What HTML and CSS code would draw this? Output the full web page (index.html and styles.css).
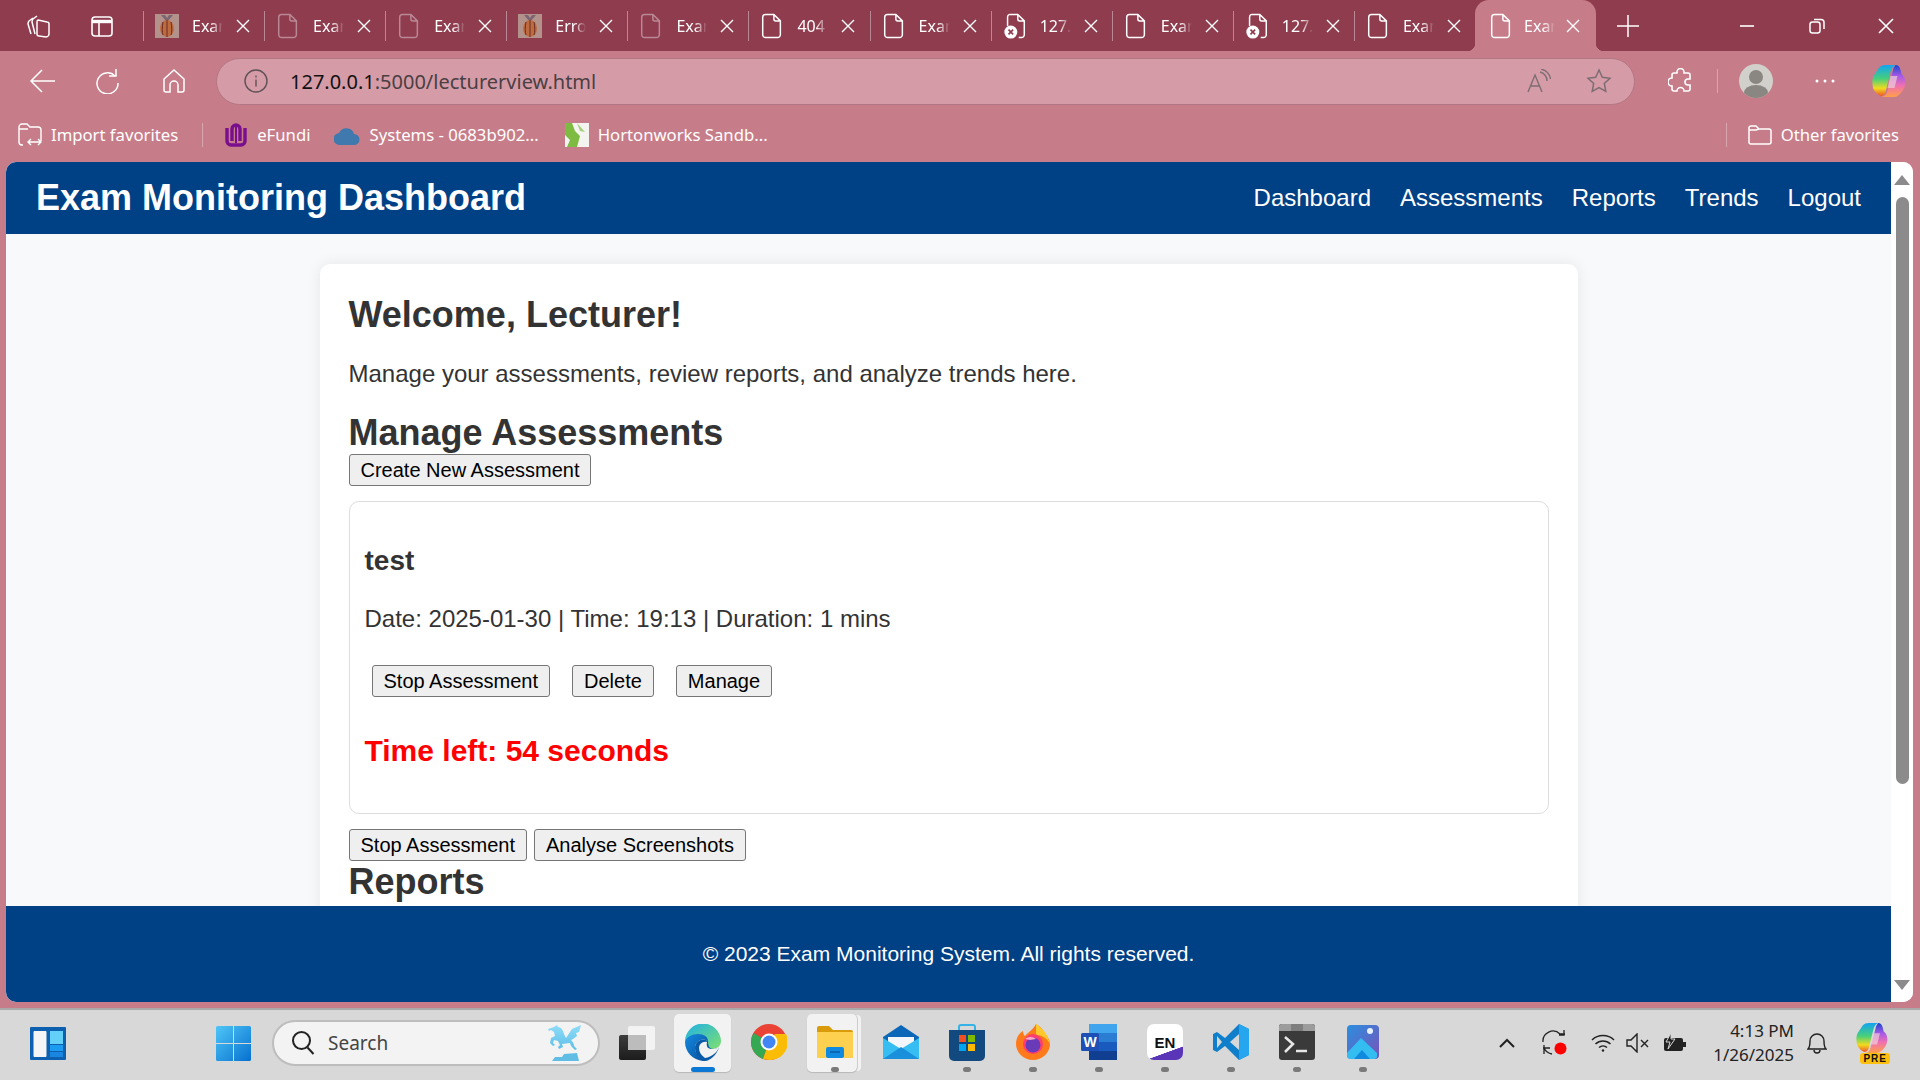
FILE: index.html
```html
<!DOCTYPE html>
<html lang="en">
<head>
    <meta charset="UTF-8">
    <meta name="viewport" content="width=device-width, initial-scale=1.0">
    <title>Exam Monitoring Dashboard</title>
    <link rel="stylesheet" href="styles.css">
</head>
<body>
    <svg class="defs" width="0" height="0">
        <defs>
            <linearGradient id="cpA" x1="0" y1="0" x2="0" y2="1">
                <stop offset="0" stop-color="#12a4f0"/>
                <stop offset=".45" stop-color="#48d07a"/>
                <stop offset=".75" stop-color="#f0dc1e"/>
                <stop offset="1" stop-color="#f0562c"/>
            </linearGradient>
            <linearGradient id="cpB" x1="0" y1="0" x2="0" y2="1">
                <stop offset="0" stop-color="#1746d0"/>
                <stop offset=".35" stop-color="#a85ae6"/>
                <stop offset=".65" stop-color="#f070b0"/>
                <stop offset="1" stop-color="#ffa048"/>
            </linearGradient>
        </defs>
        <symbol id="doc" viewBox="0 0 24 28">
            <path d="M5 1.5h9l7 7v15a3 3 0 0 1-3 3H5a3 3 0 0 1-3-3v-19a3 3 0 0 1 3-3zM14 1.5v5a2 2 0 0 0 2 2h5" fill="none" stroke="currentColor" stroke-width="1.6"/>
        </symbol>
        <symbol id="doc-x" viewBox="0 0 24 28">
            <path d="M6 1.5h9l7 7v15a3 3 0 0 1-3 3h-3M4 14V4.5a3 3 0 0 1 2-3M15 1.5v5a2 2 0 0 0 2 2h5" fill="none" stroke="#fff" stroke-width="1.6"/>
            <circle cx="7.5" cy="20.5" r="7" fill="#fff"/>
            <path d="M5 18l5 5M10 18l-5 5" stroke="#8f3c4e" stroke-width="1.8"/>
        </symbol>
        <symbol id="bee" viewBox="0 0 24 24">
            <rect width="24" height="24" fill="#b4928c"/>
            <path d="M12 8L6 1h4l2 3 2-3h4z" fill="#7a6672"/>
            <ellipse cx="12" cy="14.500" rx="7" ry="8.500" fill="#bd6c40"/>
            <path d="M8 8c-1 5-1 10 0 13M12 6v17M16 8c1 5 1 10 0 13" fill="none" stroke="#6d2b22" stroke-width="1"/>
        </symbol>
        <symbol id="close" viewBox="0 0 14 14">
            <path d="M1 1l12 12M13 1L1 13" stroke="currentColor" stroke-width="1.4" fill="none"/>
        </symbol>
        <symbol id="copilot" viewBox="0 0 34 32">
            <path d="M24 0q4 0 5 5l1 4q4 3 4 9-1 8-8 13-1 1-4 1H10q5-1 6-6l5-19q1-5 3-7z" fill="url(#cpB)"/>
            <path d="M8 2q2-2 6-2h10q-4 2-5 7l-5 20q-1 4-5 4Q1 27 1 19 0 13 4 8z" fill="url(#cpA)"/>
            <path d="M19 11h7l-3 12h-7z" fill="#f0cfd8" opacity=".7"/>
        </symbol>
    </svg>

    <div class="tabbar">
        <div class="tab-tools">
            <svg class="tool-workspace" width="26" height="26" viewBox="0 0 26 26" fill="none" stroke="#fff" stroke-width="1.5">
                <path d="M8 5l-4 3c-1 1-1 2-1 3l3 10"/>
                <path d="M12 3L8 6c-1 1-1 2-1 3l3 12"/>
                <path d="M13 7l9 2c1 0 2 1 2 2v10c0 1-1 3-3 3l-7-1c-1 0-2-1-2-2V9c0-1 0-2 1-2z"/>
            </svg>
            <svg class="tool-vertical" width="24" height="24" viewBox="0 0 24 24" fill="none" stroke="#fff" stroke-width="1.6">
                <rect x="2" y="3" width="20" height="19" rx="3"/>
                <path d="M2 7.5h20" stroke-width="3.4"/>
                <path d="M9 8v14"/>
            </svg>
        </div>
        <div class="tab"><svg class="fav"><use href="#bee"/></svg><span class="tab-title">Exam</span><svg class="tab-close"><use href="#close"/></svg></div>
        <div class="tab"><svg class="fav dim"><use href="#doc"/></svg><span class="tab-title">Exam</span><svg class="tab-close"><use href="#close"/></svg></div>
        <div class="tab"><svg class="fav dim"><use href="#doc"/></svg><span class="tab-title">Exam</span><svg class="tab-close"><use href="#close"/></svg></div>
        <div class="tab"><svg class="fav"><use href="#bee"/></svg><span class="tab-title">Error</span><svg class="tab-close"><use href="#close"/></svg></div>
        <div class="tab"><svg class="fav dim"><use href="#doc"/></svg><span class="tab-title">Exam</span><svg class="tab-close"><use href="#close"/></svg></div>
        <div class="tab"><svg class="fav"><use href="#doc"/></svg><span class="tab-title">404</span><svg class="tab-close"><use href="#close"/></svg></div>
        <div class="tab"><svg class="fav"><use href="#doc"/></svg><span class="tab-title">Exam</span><svg class="tab-close"><use href="#close"/></svg></div>
        <div class="tab"><svg class="fav"><use href="#doc-x"/></svg><span class="tab-title">127.0</span><svg class="tab-close"><use href="#close"/></svg></div>
        <div class="tab"><svg class="fav"><use href="#doc"/></svg><span class="tab-title">Exam</span><svg class="tab-close"><use href="#close"/></svg></div>
        <div class="tab"><svg class="fav"><use href="#doc-x"/></svg><span class="tab-title">127.0</span><svg class="tab-close"><use href="#close"/></svg></div>
        <div class="tab"><svg class="fav"><use href="#doc"/></svg><span class="tab-title">Exam</span><svg class="tab-close"><use href="#close"/></svg></div>
        <div class="tab tab-active"><svg class="fav"><use href="#doc"/></svg><span class="tab-title">Exam</span><svg class="tab-close"><use href="#close"/></svg></div>
        <svg class="new-tab" width="22" height="22" viewBox="0 0 22 22" stroke="#fff" stroke-width="1.5"><path d="M11 0v22M0 11h22"/></svg>
        <div class="window-controls">
            <svg width="16" height="16" viewBox="0 0 16 16" stroke="#fff" stroke-width="1.6"><path d="M1 8h14"/></svg>
            <svg width="16" height="16" viewBox="0 0 16 16" fill="none" stroke="#fff" stroke-width="1.5"><rect x="1" y="4" width="10" height="11" rx="2.5"/><path d="M5 1.5h7a3 3 0 0 1 3 3V11"/></svg>
            <svg width="16" height="16" viewBox="0 0 16 16" stroke="#fff" stroke-width="1.6"><path d="M1 1l14 14M15 1L1 15"/></svg>
        </div>
    </div>

    <div class="toolbar">
        <svg class="nav-icon nav-back" width="26" height="24" viewBox="0 0 26 24" fill="none" stroke="#fff" stroke-width="1.5"><path d="M13 1L2 12l11 11M2 12h24"/></svg>
        <svg class="nav-icon nav-reload" width="26" height="26" viewBox="0 0 26 26" fill="none" stroke="#fff" stroke-width="1.5"><path d="M20 8a10.500 10.500 0 1 0 3 7"/><path d="M21 1v7h-7"/></svg>
        <svg class="nav-icon nav-home" width="24" height="26" viewBox="0 0 24 26" fill="none" stroke="#fff" stroke-width="1.5"><path d="M12 2L2 11v11a2 2 0 0 0 2 2h4v-7a4 4 0 0 1 8 0v7h4a2 2 0 0 0 2-2V11z"/></svg>
        <div class="addressbar">
            <svg class="info" width="24" height="24" viewBox="0 0 24 24" fill="none" stroke="#5f5156" stroke-width="1.4"><circle cx="12" cy="12" r="11"/><path d="M12 10.500v7M12 6.500v2"/></svg>
            <span class="url"><span class="url-host">127.0.0.1</span>:5000/lecturerview.html</span>
            <svg class="read-aloud" width="24" height="24" viewBox="0 0 24 24" fill="none" stroke="#7d6d72" stroke-width="1.4"><path d="M1 23L8 6l7 17M3.500 17h9"/><path d="M13 3a9 9 0 0 1 7 9M14 0a12 12 0 0 1 9.500 10" /></svg>
            <svg class="star" width="26" height="26" viewBox="0 0 26 26" fill="none" stroke="#7d6d72" stroke-width="1.5"><path d="M13 2l3.300 7.300 7.700.9-5.700 5.300 1.500 7.900L13 19.500l-6.800 3.900 1.500-7.900L2 10.200l7.700-.9z"/></svg>
        </div>
        <svg class="extensions" width="24" height="26" viewBox="0 0 24 26" fill="none" stroke="#fff" stroke-width="1.6"><path d="M9 4a3.500 3.500 0 0 1 7 0v1h4a2 2 0 0 1 2 2v4h-2a3 3 0 0 0 0 6h2v4a2 2 0 0 1-2 2h-4a3.500 3.500 0 0 0-7 0H6a2 2 0 0 1-2-2v-3a3.500 3.500 0 0 1 0-8V7a2 2 0 0 1 2-2h3z"/></svg>
        <span class="toolbar-sep"></span>
        <svg class="avatar" width="34" height="34" viewBox="0 0 34 34"><circle cx="17" cy="17" r="17" fill="#d2d0ca"/><circle cx="17" cy="13" r="7" fill="#8a8783"/><path d="M5 29a12 8 0 0 1 24 0 17 17 0 0 1-24 0z" fill="#8a8783"/></svg>
        <svg class="more" width="20" height="4" viewBox="0 0 20 4" fill="#fff"><circle cx="2" cy="2" r="1.500"/><circle cx="10" cy="2" r="1.500"/><circle cx="18" cy="2" r="1.500"/></svg>
        <svg class="copilot-btn" width="35" height="32"><use href="#copilot"/></svg>
    </div>

    <div class="favbar">
        <div class="fav-item">
            <svg width="24" height="24" viewBox="0 0 24 24" fill="none" stroke="#fff" stroke-width="1.4"><path d="M5 22H4a3 3 0 0 1-3-3V4a3 3 0 0 1 3-3h5l3 3h8a3 3 0 0 1 3 3v11M1 6h9"/><path d="M10 20h13M13 17l-3 3 3 3M20 17l3 3-3 3" transform="translate(0 -1)"/></svg>
            <span>Import favorites</span>
        </div>
        <span class="fav-sep"></span>
        <div class="fav-item">
            <svg width="24" height="26" viewBox="0 0 24 26" fill="none" stroke="#7a0f8e" stroke-width="3.400"><path d="M3 6v13a4 4 0 0 0 4 4h10a4 4 0 0 0 4-4V6"/><path d="M8 19V7a4 4 0 0 1 8 0v12"/><path d="M12 3v18" stroke-width="2"/></svg>
            <span>eFundi</span>
        </div>
        <div class="fav-item fav-systems">
            <svg width="26" height="20" viewBox="0 0 26 20" fill="#4079ae"><path d="M6 20a6 6 0 0 1-1-12 8 8 0 0 1 15 1 5.500 5.500 0 0 1 0 11z"/></svg>
            <span>Systems - 0683b902...</span>
        </div>
        <div class="fav-item">
            <svg width="24" height="24" viewBox="0 0 24 24"><rect width="24" height="24" fill="#f4f4f0"/><path d="M0 0h7l3 8 5 5-3 11H2l3-7-5-5z" fill="#7dbb42"/><path d="M12 0l8 9-5-1z" fill="#a6d07a"/></svg>
            <span>Hortonworks Sandb...</span>
        </div>
        <span class="fav-sep fav-sep-right"></span>
        <div class="fav-item">
            <svg width="24" height="20" viewBox="0 0 24 20" fill="none" stroke="#fff" stroke-width="1.5"><path d="M1 3a2 2 0 0 1 2-2h5l3 3h10a2 2 0 0 1 2 2v11a2 2 0 0 1-2 2H3a2 2 0 0 1-2-2zM1 5h7l3-1"/></svg>
            <span>Other favorites</span>
        </div>
    </div>

    <div class="page">
        <div class="viewport">
            <header class="site-header">
                <h1>Exam Monitoring Dashboard</h1>
                <nav class="site-nav">
                    <a>Dashboard</a>
                    <a>Assessments</a>
                    <a>Reports</a>
                    <a>Trends</a>
                    <a>Logout</a>
                </nav>
            </header>
            <main class="content">
                <section class="card">
                    <h2>Welcome, Lecturer!</h2>
                    <p class="intro">Manage your assessments, review reports, and analyze trends here.</p>
                    <h2 class="section-title">Manage Assessments</h2>
                    <button class="btn" type="button">Create New Assessment</button>
                    <div class="assessment">
                        <h3>test</h3>
                        <p class="meta">Date: 2025-01-30 | Time: 19:13 | Duration: 1 mins</p>
                        <div class="assessment-actions">
                            <button class="btn" type="button">Stop Assessment</button>
                            <button class="btn" type="button">Delete</button>
                            <button class="btn" type="button">Manage</button>
                        </div>
                        <p class="time-left">Time left: 54 seconds</p>
                    </div>
                    <div class="global-actions">
                        <button class="btn" type="button">Stop Assessment</button>
                        <button class="btn" type="button">Analyse Screenshots</button>
                    </div>
                    <h2 class="reports-title">Reports</h2>
                    <div class="report-peek"></div>
                </section>
            </main>
            <footer class="site-footer">© 2023 Exam Monitoring System. All rights reserved.</footer>
        </div>
        <div class="scrollbar">
            <span class="arrow-up"></span>
            <span class="thumb"></span>
            <span class="arrow-down"></span>
        </div>
    </div>
    <div class="page-gap"></div>

    <div class="taskbar">
        <svg class="widgets" width="36" height="33" viewBox="0 0 36 33"><rect width="36" height="33" rx="1" fill="#0d5fb0"/><rect x="3.500" y="4" width="13" height="26" rx="1" fill="#f4f4f4"/><rect x="20" y="4" width="13" height="13" fill="#63d0fa"/><rect x="20" y="18" width="13" height="6" fill="#1b9cf0"/><rect x="20" y="25" width="13" height="5" fill="#1b86e0"/></svg>
        <svg class="start" width="35" height="35" viewBox="0 0 35 35"><defs><linearGradient id="win" x1="0" y1="0" x2="1" y2="1"><stop offset="0" stop-color="#4fc6f8"/><stop offset="1" stop-color="#0670cf"/></linearGradient></defs><path d="M0 1.500A1.500 1.500 0 0 1 1.500 0H17v17H0zM18 0h15.500A1.500 1.500 0 0 1 35 1.500V17H18zM0 18h17v17H1.500A1.500 1.500 0 0 1 0 33.500zM18 18h17v15.500a1.500 1.500 0 0 1-1.500 1.500H18z" fill="url(#win)"/></svg>
        <div class="searchbox">
            <svg width="24" height="26" viewBox="0 0 24 26" fill="none" stroke="#222" stroke-width="2"><circle cx="10.500" cy="10.500" r="8.500"/><path d="M16.500 17.500l6 6.500"/></svg>
            <span>Search</span>
            <svg class="pegasus" width="35" height="36" viewBox="0 0 35 36"><defs><linearGradient id="peg" x1="0" y1="0" x2="0" y2="1"><stop offset="0" stop-color="#8fdcf8"/><stop offset="1" stop-color="#5cbfe8"/></linearGradient></defs><path d="M4 36l3-4h7l2-3 13-1 2 8z" fill="#62bde4"/><path d="M6 2l3-2 1 2c3 0 5 3 6 7l2 4 6-9 9-4-2 7-3 1 1 3-4 3-2 1c2 2 3 4 3 6l3 3-2 1-4-4-1-3-8 1 1 3-4 2-1-2 2-2-2-4-4-1-1 3 2 2-2 1-3-3 1-5 4-2-1-4-3-2-2 1-1-2z" fill="url(#peg)"/></svg>
        </div>
        <svg class="taskview" width="36" height="34" viewBox="0 0 36 34"><defs><linearGradient id="tv" x1="0" y1="0" x2="0" y2="1"><stop offset="0" stop-color="#3c3c3c"/><stop offset="1" stop-color="#1c1c1c"/></linearGradient></defs><rect y="9" width="27" height="25" rx="2" fill="url(#tv)"/><rect x="9" y="0" width="27" height="24" rx="2" fill="#f3f3f3"/><rect x="9" y="9" width="18" height="15" fill="#bcbcbc"/></svg>
        <div class="apps">
            <div class="app app-open">
                <svg width="36" height="37" viewBox="0 0 36 37"><defs><linearGradient id="edgeA" x1="0" y1="0" x2="1" y2="1"><stop offset="0" stop-color="#1eb0e8"/><stop offset="1" stop-color="#7ee06e"/></linearGradient><linearGradient id="edgeB" x1="0" y1="0" x2="1" y2="1"><stop offset="0" stop-color="#128ae0"/><stop offset="1" stop-color="#0a4c98"/></linearGradient></defs><path d="M0 18a18 18 0 0 1 36-1c0 6-5 8-10 8-4 0-5-2-4-6 0-5-5-8-10-7-6 1-11 3-12 6z" fill="url(#edgeA)"/><path d="M0 18c1-5 7-8 13-8 6 0 10 3 10 7-6-4-13 0-13 7 0 6 6 12 14 13a18 18 0 0 1-6 0C8 36 0 28 0 18z" fill="url(#edgeB)"/><path d="M10 24c0-7 7-11 13-7 0 4 1 8 5 8 2 0 5-1 6-2-2 8-9 14-15 14-5-2-9-7-9-13z" fill="#0b5aa8"/><path d="M22 18c-1 5 1 7 5 7 3 0 7-1 8-4-2 7-8 12-15 13-4-3-6-6-6-10 0-3 3-7 8-6z" fill="#f2f2f2"/></svg>
            </div>
            <div class="app">
                <svg width="36" height="36" viewBox="0 0 36 36"><circle cx="18" cy="18" r="18" fill="#ea4335"/><path d="M18 18L2.500 9A18 18 0 0 0 12 35z" fill="#34a853"/><path d="M18 18l6-8h11a18 18 0 0 1-17 26l-6-1z" fill="#fbbc05"/><circle cx="18" cy="18" r="8.500" fill="#fff"/><circle cx="18" cy="18" r="6.500" fill="#4285f4"/></svg>
            </div>
            <div class="app app-tile app-running">
                <svg width="36" height="32" viewBox="0 0 36 32"><path d="M0 2a2 2 0 0 1 2-2h10l4 4h18a2 2 0 0 1 2 2v6H0z" fill="#d99b0a"/><path d="M0 6h36v26H0z" fill="#fdd14f"/><rect x="9" y="21" width="18" height="11" rx="2" fill="#0f8ae0"/><path d="M13 26h10" stroke="#0b5aa8" stroke-width="1.500"/></svg>
            </div>
            <div class="app">
                <svg width="36" height="34" viewBox="0 0 36 34"><path d="M0 12L18 0l18 12v22H0z" fill="#0d67b8"/><path d="M5 12h26v6L18 25 5 18z" fill="#f3f6fa"/><path d="M0 13l18 11 18-11v21H0z" fill="#36bdf2"/><path d="M0 34l18-12 18 12z" fill="#1a90dc"/></svg>
            </div>
            <div class="app app-running">
                <svg width="36" height="37" viewBox="0 0 36 37"><path d="M10 7V3a2 2 0 0 1 2-2h12a2 2 0 0 1 2 2v4" fill="none" stroke="#35b3e8" stroke-width="2"/><path d="M0 6h36v26a5 5 0 0 1-5 5H5a5 5 0 0 1-5-5z" fill="#12497f"/><rect x="10" y="11" width="7" height="7" fill="#f25022"/><rect x="19" y="11" width="7" height="7" fill="#7fba00"/><rect x="10" y="20" width="7" height="7" fill="#00a4ef"/><rect x="19" y="20" width="7" height="7" fill="#ffb900"/></svg>
            </div>
            <div class="app app-running">
                <svg width="34" height="36" viewBox="0 0 34 36"><path d="M20 0c6 4 8 7 8 9 4 3 6 8 6 11a17 16 0 0 1-34 0C0 14 3 9 7 7c0 3 1 4 2 5 2-3 7-5 11-12z" fill="#ff7a1a"/><path d="M20 0c6 4 12 10 14 20-3-6-8-9-14-9z" fill="#ffc92c"/><circle cx="17" cy="20" r="10" fill="#ff3d6e"/><circle cx="17" cy="21" r="7.500" fill="#6a3bb8"/><path d="M9 15c4-3 9-2 11 0l-6 1z" fill="#f6a6c8"/></svg>
            </div>
            <div class="app app-running">
                <svg width="36" height="36" viewBox="0 0 36 36"><rect x="8" y="0" width="28" height="36" rx="2" fill="#2b7cd3"/><rect x="8" y="0" width="28" height="9" fill="#41a5ee"/><rect x="8" y="18" width="28" height="9" fill="#185abd"/><rect x="8" y="27" width="28" height="9" fill="#103f91"/><rect x="0" y="9" width="18" height="18" rx="1.500" fill="#1e4fb4"/><text x="9" y="23" class="word-w">W</text></svg>
            </div>
            <div class="app app-running">
                <div class="en-tile"><span>EN</span></div>
            </div>
            <div class="app app-running">
                <svg width="36" height="36" viewBox="0 0 36 36"><path d="M26 0l10 5v26l-10 5-14-14-8 6-4-2v-16l4-2 8 6z" fill="#0f7fcc"/><path d="M26 0l10 5v26l-10 5z" fill="#25a6ef"/><path d="M26 10l-9 8 9 8z" fill="#d8d8d8"/><path d="M4 12v12l5-6z" fill="#d8d8d8"/></svg>
            </div>
            <div class="app app-running">
                <svg width="36" height="36" viewBox="0 0 36 36"><rect width="36" height="36" rx="3" fill="#3a3a3a"/><path d="M0 3a3 3 0 0 1 3-3h9v7H0z" fill="#9c9c9c"/><path d="M12 0h12v7H12z" fill="#7e7e7e"/><path d="M24 0h9a3 3 0 0 1 3 3v4H24z" fill="#9c9c9c"/><path d="M6 13l8 7-8 8" fill="none" stroke="#e8e8e8" stroke-width="2.500"/><path d="M17 27h11" stroke="#e8e8e8" stroke-width="2.500"/></svg>
            </div>
            <div class="app app-running">
                <svg width="32" height="34" viewBox="0 0 32 34"><defs><linearGradient id="ph" x1="0" y1="0" x2="1" y2="1"><stop offset="0" stop-color="#2a8fe0"/><stop offset="1" stop-color="#7a52b8"/></linearGradient></defs><rect width="32" height="34" rx="4" fill="url(#ph)"/><circle cx="23" cy="6" r="3" fill="#e8f2ff"/><path d="M0 28l14-15 16 15v3a3 3 0 0 1-3 3H4a4 4 0 0 1-4-3z" fill="#34bdf0"/><path d="M7 34l8-9 8 9z" fill="#0f8adf"/></svg>
            </div>
        </div>
        <div class="tray">
            <svg class="tray-chevron" width="16" height="10" viewBox="0 0 16 10" fill="none" stroke="#222" stroke-width="2"><path d="M1 9l7-7 7 7"/></svg>
            <svg class="tray-sync" width="26" height="26" viewBox="0 0 26 26"><path d="M1 12a10 10 0 0 1 17-8h5M22 0v5h-5M1 18h7M2 15v9M2 18a11 11 0 0 0 8 6" fill="none" stroke="#222" stroke-width="1.300"/><circle cx="18.500" cy="18.500" r="6" fill="#f00"/></svg>
            <svg class="tray-wifi" width="24" height="18" viewBox="0 0 24 18" fill="none" stroke="#222" stroke-width="1.500"><path d="M1 6a16 16 0 0 1 22 0M4.500 10a11 11 0 0 1 15 0M8 13.500a6 6 0 0 1 8 0"/><circle cx="12" cy="16.500" r="1.200" fill="#222" stroke="none"/></svg>
            <svg class="tray-mute" width="24" height="20" viewBox="0 0 24 20" fill="none" stroke="#222" stroke-width="1.400"><path d="M1 7v6h4l6 6V1L5 7zM15 7l7 7M22 7l-7 7"/></svg>
            <svg class="tray-battery" width="24" height="20" viewBox="0 0 24 20"><rect x="1" y="5" width="19" height="13" rx="2" fill="#222"/><rect x="20" y="9" width="3" height="5" fill="#222"/><path d="M8 0L3 9h4l-2 7 7-10H8z" fill="#222" stroke="#d8d8d8"/></svg>
            <div class="clock"><span>4:13 PM</span><span>1/26/2025</span></div>
            <svg class="tray-bell" width="20" height="22" viewBox="0 0 20 22" fill="none" stroke="#222" stroke-width="1.400"><path d="M1 17c2-2 2-4 2-8a7 7 0 0 1 14 0c0 4 0 6 2 8zM7 18a3 3 0 0 0 6 0"/></svg>
            <div class="tray-copilot">
                <svg width="35" height="30"><use href="#copilot"/></svg>
                <span class="pre">PRE</span>
            </div>
        </div>
    </div>
</body>
</html>
```

FILE: styles.css
```css
* {
    box-sizing: border-box;
}

html, body {
    height: 100%;
}

body {
    margin: 0;
    width: 1920px;
    height: 1080px;
    overflow: hidden;
    display: flex;
    flex-direction: column;
    background-color: #c77d89;
    font-family: "Liberation Sans", Arial, sans-serif;
}

.defs {
    position: absolute;
}

/* browser tabs */
.tabbar {
    height: 51px;
    flex: none;
    display: flex;
    align-items: center;
    background-color: #8f3c4e;
    color: #fff;
    font-family: "Noto Sans", sans-serif;
}

.tab-tools {
    width: 143px;
    flex: none;
    display: flex;
    align-items: center;
    padding-left: 25px;
    gap: 39px;
}

.tab {
    width: 121.1px;
    height: 30px;
    flex: none;
    display: flex;
    align-items: center;
    padding-left: 11px;
    border-left: 1px solid #b98894;
}

.fav {
    width: 24px;
    height: 26px;
    flex: none;
    color: #fff;
}

.fav.dim {
    color: #b98894;
}

/* box is wider than the visible part, the mask fades the title out before the close icon */
.tab-title {
    width: 46px;
    margin: 0 -15px 0 13px;
    flex: none;
    white-space: nowrap;
    font-size: 16px;
    -webkit-mask-image: linear-gradient(90deg, #000 19px, transparent 31px);
    mask-image: linear-gradient(90deg, #000 19px, transparent 31px);
}

.tab-close {
    width: 14px;
    height: 14px;
    margin-left: 13px;
    flex: none;
}

.tab-active {
    position: relative;
    height: 51px;
    border-left: 0;
    border-radius: 14px 14px 0 0;
    background-color: #c77d89;
    align-self: flex-end;
    padding-left: 14px;
}

.tab-active .tab-title {
    margin-left: 11px;
}

.tab-active .tab-close {
    margin-left: 11px;
}

.tab-active::before,
.tab-active::after {
    content: "";
    position: absolute;
    bottom: 0;
    width: 8px;
    height: 8px;
}

.tab-active::before {
    left: -8px;
    background: radial-gradient(circle at 0 0, transparent 8px, #c77d89 8.5px);
}

.tab-active::after {
    right: -8px;
    background: radial-gradient(circle at 100% 0, transparent 8px, #c77d89 8.5px);
}

.new-tab {
    margin-left: 21px;
    flex: none;
}

.window-controls {
    margin-left: auto;
    width: 206px;
    padding: 0 26px 0 25px;
    display: flex;
    justify-content: space-between;
    align-items: center;
}

/* address row */
.toolbar {
    height: 54px;
    flex: none;
    display: flex;
    align-items: center;
    padding-top: 6px;
    background-color: #c77d89;
}

.nav-back {
    margin-left: 29px;
}

.nav-reload {
    margin-left: 40px;
}

.nav-home {
    margin-left: 41px;
}

.addressbar {
    width: 1419px;
    height: 47px;
    margin-left: 30px;
    display: flex;
    align-items: center;
    padding-left: 27px;
    border: 1px solid #b37684;
    border-radius: 24px;
    background-color: #d59ca8;
    font-family: "Noto Sans", sans-serif;
}

.url {
    margin-left: 22px;
    font-size: 20px;
    color: #4a3f43;
}

.url-host {
    color: #111;
}

.read-aloud {
    margin-left: auto;
}

.star {
    margin-left: 35px;
    margin-right: 22px;
}

.extensions {
    margin-left: 33px;
}

.toolbar-sep {
    width: 1px;
    height: 24px;
    margin-left: 25px;
    background-color: #d9a5af;
}

.avatar {
    margin-left: 21px;
}

.more {
    margin-left: 42px;
}

.copilot-btn {
    margin-left: 36px;
}

/* favorites row */
.favbar {
    height: 57px;
    flex: none;
    display: flex;
    align-items: center;
    padding: 2px 21px 0 18px;
    color: #fff;
    font-family: "Noto Sans", sans-serif;
    font-size: 16.7px;
    background-color: #c77d89;
}

.fav-item {
    display: flex;
    align-items: center;
    gap: 9px;
    margin-right: 24px;
    white-space: nowrap;
}

.fav-item:last-child {
    margin-right: 0;
}

.fav-systems {
    margin-right: 26px;
}

.fav-sep {
    width: 1px;
    height: 24px;
    margin-right: 21px;
    background-color: #d9a5af;
}

.fav-sep-right {
    margin-left: auto;
}

/* the dashboard itself */
.page {
    height: 840px;
    flex: none;
    display: flex;
    margin: 0 7px 0 6px;
    border-radius: 10px;
    overflow: hidden;
    background-color: #fff;
}

.viewport {
    flex: 1;
    min-width: 0;
    display: flex;
    flex-direction: column;
    background-color: #f8f9fa;
}

.site-header {
    height: 72px;
    flex: none;
    display: flex;
    align-items: center;
    justify-content: space-between;
    padding: 0 30px;
    background-color: #004085;
    color: #fff;
}

.site-header h1 {
    margin: 0;
    font-size: 36px;
}

.site-nav {
    display: flex;
    gap: 29px;
    font-size: 24px;
}

.content {
    flex: 1;
    min-height: 0;
    overflow: hidden;
    padding-top: 30px;
}

.card {
    width: 1258px;
    margin: 0 auto;
    padding: 30px 29px;
    border-radius: 10px;
    background-color: #fff;
    box-shadow: 0 0 15px rgba(0, 0, 0, 0.08);
    color: #333;
}

.card h2 {
    margin: 0;
    font-size: 36px;
}

.intro {
    margin: 24px 0 0;
    font-size: 24px;
}

.card .section-title {
    margin-top: 24px;
}

.btn {
    height: 32px;
    padding: 0 11px;
    border: 1px solid #767676;
    border-radius: 3px;
    background-color: #efefef;
    color: #000;
    font-family: "Liberation Sans", Arial, sans-serif;
    font-size: 20px;
    white-space: nowrap;
}

.assessment {
    margin: 15px 0;
    padding: 15px;
    border: 1px solid #ddd;
    border-radius: 10px;
}

.assessment h3 {
    margin: 28px 0 0;
    font-size: 28px;
}

.meta {
    margin: 28px 0 0;
    font-size: 24px;
}

.assessment-actions {
    display: flex;
    gap: 22px;
    margin: 32px 0 0 7px;
}

.time-left {
    margin: 37px 0 30px;
    color: #f00;
    font-size: 30px;
    font-weight: bold;
}

.global-actions {
    display: flex;
    gap: 7px;
}

.report-peek {
    width: 175px;
    height: 32px;
    margin: 3px 0 0 236px;
    border: 1px solid #767676;
    border-radius: 3px;
    background-color: #efefef;
}

.site-footer {
    height: 96px;
    flex: none;
    display: flex;
    align-items: center;
    justify-content: center;
    background-color: #004085;
    color: #fff;
    font-size: 21px;
}

.scrollbar {
    width: 22px;
    flex: none;
    display: flex;
    flex-direction: column;
    align-items: center;
    padding: 13px 0 12px;
    background-color: #fff;
}

.arrow-up {
    width: 0;
    height: 0;
    border-left: 8px solid transparent;
    border-right: 8px solid transparent;
    border-bottom: 10px solid #8b8b8b;
}

.thumb {
    width: 13px;
    height: 587px;
    margin-top: 12px;
    border-radius: 7px;
    background-color: #8b8b8b;
}

.arrow-down {
    width: 0;
    height: 0;
    margin-top: auto;
    border-left: 8px solid transparent;
    border-right: 8px solid transparent;
    border-top: 10px solid #8b8b8b;
}

.page-gap {
    height: 6px;
    flex: none;
    background-color: #c77d89;
}

/* windows taskbar */
.taskbar {
    flex: 1;
    display: flex;
    align-items: center;
    padding: 0 0 4px 30px;
    border-top: 2px solid #a9a9a9;
    background-color: #d8d8d8;
    font-family: "Noto Sans", sans-serif;
}

.start {
    margin-left: 150px;
}

.searchbox {
    width: 328px;
    height: 46px;
    margin-left: 21px;
    display: flex;
    align-items: center;
    padding: 0 15px 0 17px;
    border: 2px solid #bdbdbd;
    border-radius: 23px;
    background-color: #f3f3f3;
    color: #444;
    font-size: 19px;
}

.searchbox span {
    margin-left: 13px;
}

.pegasus {
    margin-left: auto;
}

.taskview {
    margin-left: 19px;
}

.apps {
    display: flex;
    margin-left: 15px;
}

.app {
    position: relative;
    width: 66px;
    height: 60px;
    padding-bottom: 2px;
    display: flex;
    align-items: center;
    justify-content: center;
}

.app-open::before,
.app-tile::before {
    content: "";
    position: absolute;
    left: 4px;
    top: 1px;
    width: 57px;
    height: 58px;
    border-radius: 5px;
    background-color: #f2f2f2;
    box-shadow: 0 1px 1px rgba(0, 0, 0, 0.15);
}

.app-tile::before {
    left: 5px;
    width: 50px;
    box-shadow: 0 1px 1px rgba(0, 0, 0, 0.15), 1px 0 0 #cfcfcf, 5px 0 0 -1px #f2f2f2;
}

.app svg,
.app .en-tile {
    position: relative;
}

.app-open::after {
    content: "";
    position: absolute;
    left: 21px;
    bottom: 1px;
    width: 24px;
    height: 5px;
    border-radius: 3px;
    background-color: #0a78d4;
}

.app-running::after {
    content: "";
    position: absolute;
    left: 29px;
    bottom: 1px;
    width: 8px;
    height: 5px;
    border-radius: 3px;
    background-color: #7a7a7a;
}

.word-w {
    fill: #fff;
    font-family: "Liberation Sans", Arial, sans-serif;
    font-size: 14px;
    font-weight: bold;
    text-anchor: middle;
}

.en-tile {
    width: 36px;
    height: 36px;
    display: flex;
    align-items: center;
    justify-content: center;
    border-radius: 7px;
    background: linear-gradient(160deg, #fff 72%, #5a35b8 73%);
    color: #111;
    font-family: "Liberation Sans", Arial, sans-serif;
    font-size: 15px;
    font-weight: bold;
}

.tray {
    margin-left: auto;
    display: flex;
    align-items: center;
    color: #222;
}

.tray-sync {
    margin-left: 27px;
}

.tray-wifi {
    margin-left: 23px;
}

.tray-mute {
    margin-left: 11px;
}

.tray-battery {
    margin-left: 13px;
}

.clock {
    width: 95px;
    margin-left: 12px;
    display: flex;
    flex-direction: column;
    align-items: flex-end;
    font-size: 17px;
    line-height: 24px;
}

.tray-bell {
    margin-left: 13px;
}

.tray-copilot {
    position: relative;
    width: 36px;
    height: 40px;
    margin: 0 30px 0 27px;
}

.pre {
    position: absolute;
    right: 0;
    bottom: -1px;
    padding: 0 3px;
    border-radius: 3px;
    background-color: #fdc00f;
    color: #111;
    font-family: "Liberation Sans", Arial, sans-serif;
    font-size: 10px;
    font-weight: bold;
    letter-spacing: 1px;
    line-height: 11px;
}
```
